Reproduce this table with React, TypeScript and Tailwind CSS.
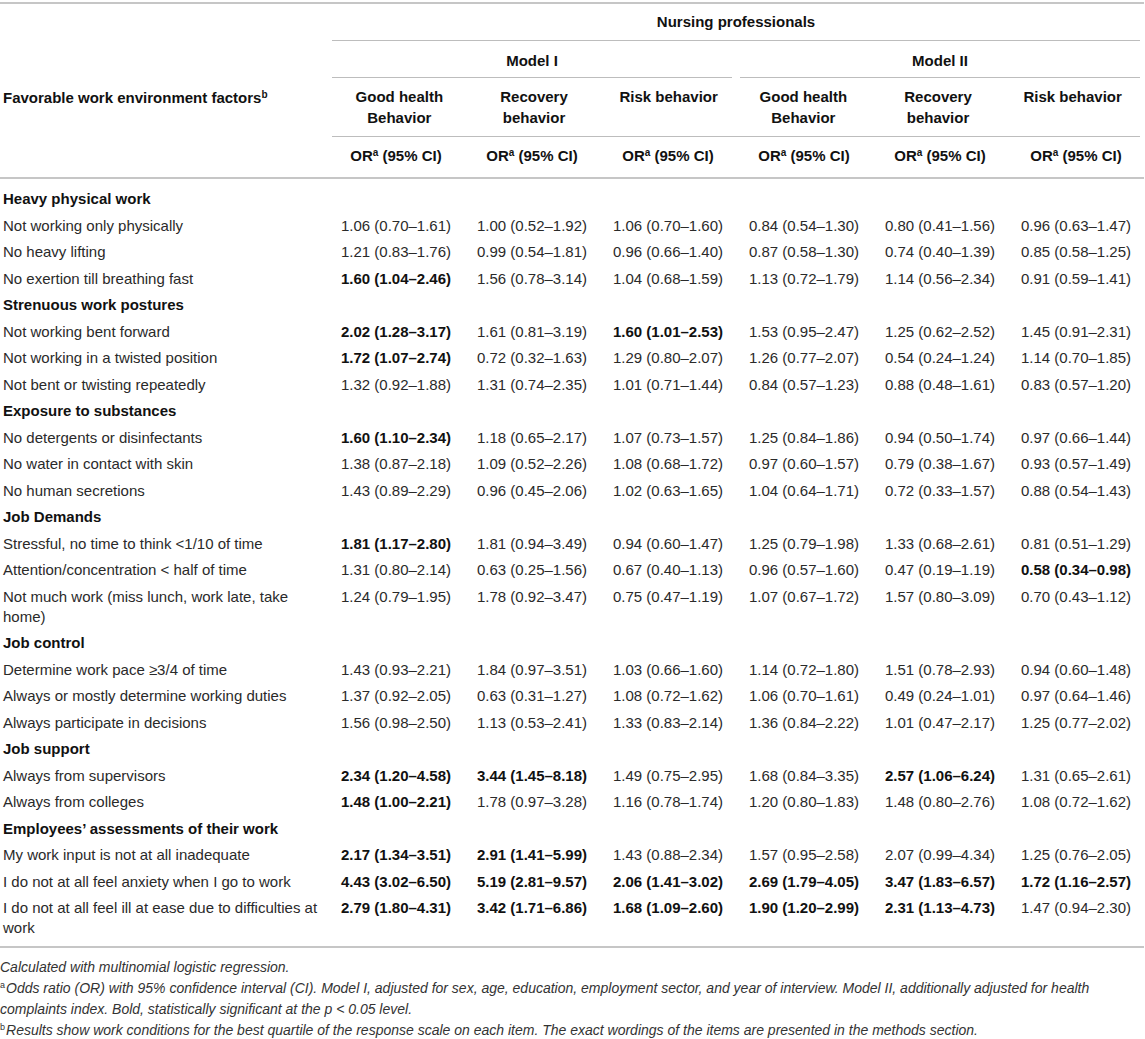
const font = { fontFamily: '"Liberation Sans", Arial, sans-serif' }

type Row = { label: string; values: string[] }
type Section = { title: string; rows: Row[] }

// values starting with * are bold (p < 0.05)
const sections: Section[] = [
  {
    title: "Heavy physical work",
    rows: [
      { label: "Not working only physically", values: ["1.06 (0.70–1.61)", "1.00 (0.52–1.92)", "1.06 (0.70–1.60)", "0.84 (0.54–1.30)", "0.80 (0.41–1.56)", "0.96 (0.63–1.47)"] },
      { label: "No heavy lifting", values: ["1.21 (0.83–1.76)", "0.99 (0.54–1.81)", "0.96 (0.66–1.40)", "0.87 (0.58–1.30)", "0.74 (0.40–1.39)", "0.85 (0.58–1.25)"] },
      { label: "No exertion till breathing fast", values: ["*1.60 (1.04–2.46)", "1.56 (0.78–3.14)", "1.04 (0.68–1.59)", "1.13 (0.72–1.79)", "1.14 (0.56–2.34)", "0.91 (0.59–1.41)"] },
    ],
  },
  {
    title: "Strenuous work postures",
    rows: [
      { label: "Not working bent forward", values: ["*2.02 (1.28–3.17)", "1.61 (0.81–3.19)", "*1.60 (1.01–2.53)", "1.53 (0.95–2.47)", "1.25 (0.62–2.52)", "1.45 (0.91–2.31)"] },
      { label: "Not working in a twisted position", values: ["*1.72 (1.07–2.74)", "0.72 (0.32–1.63)", "1.29 (0.80–2.07)", "1.26 (0.77–2.07)", "0.54 (0.24–1.24)", "1.14 (0.70–1.85)"] },
      { label: "Not bent or twisting repeatedly", values: ["1.32 (0.92–1.88)", "1.31 (0.74–2.35)", "1.01 (0.71–1.44)", "0.84 (0.57–1.23)", "0.88 (0.48–1.61)", "0.83 (0.57–1.20)"] },
    ],
  },
  {
    title: "Exposure to substances",
    rows: [
      { label: "No detergents or disinfectants", values: ["*1.60 (1.10–2.34)", "1.18 (0.65–2.17)", "1.07 (0.73–1.57)", "1.25 (0.84–1.86)", "0.94 (0.50–1.74)", "0.97 (0.66–1.44)"] },
      { label: "No water in contact with skin", values: ["1.38 (0.87–2.18)", "1.09 (0.52–2.26)", "1.08 (0.68–1.72)", "0.97 (0.60–1.57)", "0.79 (0.38–1.67)", "0.93 (0.57–1.49)"] },
      { label: "No human secretions", values: ["1.43 (0.89–2.29)", "0.96 (0.45–2.06)", "1.02 (0.63–1.65)", "1.04 (0.64–1.71)", "0.72 (0.33–1.57)", "0.88 (0.54–1.43)"] },
    ],
  },
  {
    title: "Job Demands",
    rows: [
      { label: "Stressful, no time to think <1/10 of time", values: ["*1.81 (1.17–2.80)", "1.81 (0.94–3.49)", "0.94 (0.60–1.47)", "1.25 (0.79–1.98)", "1.33 (0.68–2.61)", "0.81 (0.51–1.29)"] },
      { label: "Attention/concentration < half of time", values: ["1.31 (0.80–2.14)", "0.63 (0.25–1.56)", "0.67 (0.40–1.13)", "0.96 (0.57–1.60)", "0.47 (0.19–1.19)", "*0.58 (0.34–0.98)"] },
      { label: "Not much work (miss lunch, work late, take home)", values: ["1.24 (0.79–1.95)", "1.78 (0.92–3.47)", "0.75 (0.47–1.19)", "1.07 (0.67–1.72)", "1.57 (0.80–3.09)", "0.70 (0.43–1.12)"] },
    ],
  },
  {
    title: "Job control",
    rows: [
      { label: "Determine work pace ≥3/4 of time", values: ["1.43 (0.93–2.21)", "1.84 (0.97–3.51)", "1.03 (0.66–1.60)", "1.14 (0.72–1.80)", "1.51 (0.78–2.93)", "0.94 (0.60–1.48)"] },
      { label: "Always or mostly determine working duties", values: ["1.37 (0.92–2.05)", "0.63 (0.31–1.27)", "1.08 (0.72–1.62)", "1.06 (0.70–1.61)", "0.49 (0.24–1.01)", "0.97 (0.64–1.46)"] },
      { label: "Always participate in decisions", values: ["1.56 (0.98–2.50)", "1.13 (0.53–2.41)", "1.33 (0.83–2.14)", "1.36 (0.84–2.22)", "1.01 (0.47–2.17)", "1.25 (0.77–2.02)"] },
    ],
  },
  {
    title: "Job support",
    rows: [
      { label: "Always from supervisors", values: ["*2.34 (1.20–4.58)", "*3.44 (1.45–8.18)", "1.49 (0.75–2.95)", "1.68 (0.84–3.35)", "*2.57 (1.06–6.24)", "1.31 (0.65–2.61)"] },
      { label: "Always from colleges", values: ["*1.48 (1.00–2.21)", "1.78 (0.97–3.28)", "1.16 (0.78–1.74)", "1.20 (0.80–1.83)", "1.48 (0.80–2.76)", "1.08 (0.72–1.62)"] },
    ],
  },
  {
    title: "Employees’ assessments of their work",
    rows: [
      { label: "My work input is not at all inadequate", values: ["*2.17 (1.34–3.51)", "*2.91 (1.41–5.99)", "1.43 (0.88–2.34)", "1.57 (0.95–2.58)", "2.07 (0.99–4.34)", "1.25 (0.76–2.05)"] },
      { label: "I do not at all feel anxiety when I go to work", values: ["*4.43 (3.02–6.50)", "*5.19 (2.81–9.57)", "*2.06 (1.41–3.02)", "*2.69 (1.79–4.05)", "*3.47 (1.83–6.57)", "*1.72 (1.16–2.57)"] },
      { label: "I do not at all feel ill at ease due to difficulties at work", values: ["*2.79 (1.80–4.31)", "*3.42 (1.71–6.86)", "*1.68 (1.09–2.60)", "*1.90 (1.20–2.99)", "*2.31 (1.13–4.73)", "1.47 (0.94–2.30)"] },
    ],
  },
]

const outcomes = [["Good health", "Behavior"], ["Recovery", "behavior"], ["Risk behavior"]]

const OR = () => (
  <span>
    OR<sup className="text-[10px] leading-none font-bold">a</sup> (95% CI)
  </span>
)

const Cell = ({ v }: { v: string }) => {
  const bold = v.startsWith("*")
  return (
    <div className={`w-[136px] shrink-0 text-center ${bold ? "font-bold text-[#111]" : "text-[#2a2a2a]"}`}>
      {bold ? v.slice(1) : v}
    </div>
  )
}

export default function App() {
  return (
    <div className="min-h-screen bg-white pt-[2px]" style={font}>
      <div className="w-[1144px] text-[15px] text-[#1a1a1a]">
        {/* header */}
        <div className="flex border-y-2 border-[#c6c6c6] font-bold text-[#111]">
          <div className="w-[328px] shrink-0 pl-[3px] pt-[84px] leading-[20px]">
            Favorable work environment factors<sup className="text-[10px] leading-none">b</sup>
          </div>
          <div className="flex flex-1 flex-col">
            <div className="mx-[4px] border-b border-[#bdbdbd] py-[8px] text-center leading-[20px]">Nursing professionals</div>
            <div className="flex">
              {["Model I", "Model II"].map((m) => (
                <div key={m} className="mx-[4px] flex-1 border-b border-[#bdbdbd] pb-[6px] pt-[10px] text-center leading-[20px]">
                  {m}
                </div>
              ))}
            </div>
            <div className="mx-[4px] flex border-b border-[#bdbdbd]">
              {[...outcomes, ...outcomes].map((o, i) => (
                <div key={i} className="flex-1 py-[8px] text-center leading-[21px]">
                  {o.map((l) => (
                    <div key={l}>{l}</div>
                  ))}
                </div>
              ))}
            </div>
            <div className="flex">
              {[0, 1, 2, 3, 4, 5].map((i) => (
                <div key={i} className="w-[136px] shrink-0 pb-[11px] pt-[9px] text-center leading-[20px]">
                  <OR />
                </div>
              ))}
            </div>
          </div>
        </div>

        {/* body */}
        <div className="border-b-2 border-[#c6c6c6] pb-[4px] pt-[7px] leading-[20px]">
          {sections.map((s) => (
            <div key={s.title}>
              <div className="py-[3.25px] pl-[3px] font-bold text-[#111]">{s.title}</div>
              {s.rows.map((r) => (
                <div key={r.label} className="flex py-[3.25px]">
                  <div className="w-[328px] shrink-0 pl-[3px] pr-[5px] text-[#2a2a2a]">{r.label}</div>
                  {r.values.map((v, i) => (
                    <Cell key={i} v={v} />
                  ))}
                </div>
              ))}
            </div>
          ))}
        </div>

        {/* footnotes */}
        <div className="pr-[4px] pt-[9px] text-[14px] italic leading-[21px] text-[#333]">
          <p>Calculated with multinomial logistic regression.</p>
          <p>
            <span className="mr-[1px] align-top text-[9px] leading-[14px] not-italic">a</span>Odds ratio (OR) with 95% confidence interval (CI).
            Model I, adjusted for sex, age, education, employment sector, and year of interview. Model II, additionally adjusted for health
            complaints index. Bold, statistically significant at the p &lt; 0.05 level.
          </p>
          <p>
            <span className="mr-[1px] align-top text-[9px] leading-[14px] not-italic">b</span>Results show work conditions for the best quartile
            of the response scale on each item. The exact wordings of the items are presented in the methods section.
          </p>
        </div>
      </div>
    </div>
  )
}
